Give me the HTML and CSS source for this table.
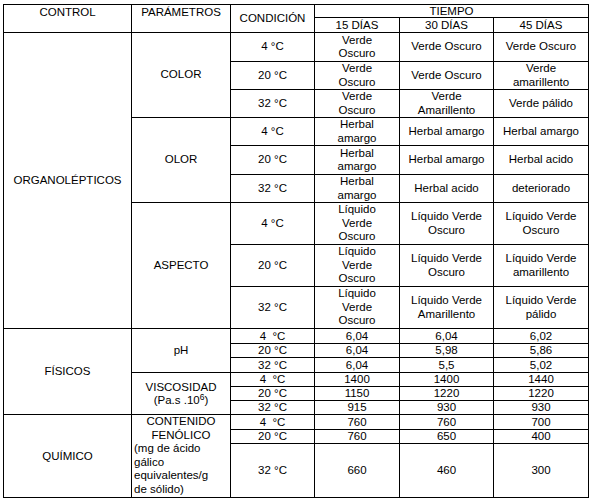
FILE: index.html
```html
<!DOCTYPE html>
<html lang="es">
<head>
<meta charset="utf-8">
<title>Control de estabilidad</title>
<link rel="stylesheet" href="styles.css">
</head>
<body>
<div class="page">
<table class="grid">
<colgroup>
<col class="c-control"><col class="c-param"><col class="c-cond"><col class="c-d15"><col class="c-d30"><col class="c-d45">
</colgroup>
<tr class="h13">
<td rowspan="2" class="top">CONTROL</td>
<td rowspan="2" class="top">PARÁMETROS</td>
<td rowspan="2">CONDICIÓN</td>
<td colspan="3" class="tight">TIEMPO</td>
</tr>
<tr class="h15">
<td>15 DÍAS</td><td>30 DÍAS</td><td>45 DÍAS</td>
</tr>

<tr class="h29">
<td rowspan="9">ORGANOLÉPTICOS</td>
<td rowspan="3">COLOR</td>
<td>4 °C</td><td>Verde<br>Oscuro</td><td>Verde Oscuro</td><td>Verde Oscuro</td>
</tr>
<tr class="h28">
<td>20 °C</td><td>Verde<br>Oscuro</td><td>Verde Oscuro</td><td>Verde<br>amarillento</td>
</tr>
<tr class="h28">
<td>32 °C</td><td>Verde<br>Oscuro</td><td>Verde<br>Amarillento</td><td>Verde pálido</td>
</tr>

<tr class="h28">
<td rowspan="3">OLOR</td>
<td>4 °C</td><td>Herbal<br>amargo</td><td>Herbal amargo</td><td>Herbal amargo</td>
</tr>
<tr class="h29">
<td>20 °C</td><td>Herbal<br>amargo</td><td>Herbal amargo</td><td>Herbal acido</td>
</tr>
<tr class="h28">
<td>32 °C</td><td>Herbal<br>amargo</td><td>Herbal acido</td><td>deteriorado</td>
</tr>

<tr class="h42">
<td rowspan="3">ASPECTO</td>
<td>4 °C</td><td>Líquido<br>Verde<br>Oscuro</td><td>Líquido Verde<br>Oscuro</td><td>Líquido Verde<br>Oscuro</td>
</tr>
<tr class="h42">
<td>20 °C</td><td>Líquido<br>Verde<br>Oscuro</td><td>Líquido Verde<br>Oscuro</td><td>Líquido Verde<br>amarillento</td>
</tr>
<tr class="h42">
<td>32 °C</td><td>Líquido<br>Verde<br>Oscuro</td><td>Líquido Verde<br>Amarillento</td><td>Líquido Verde<br>pálido</td>
</tr>

<tr class="h15">
<td rowspan="6">FÍSICOS</td>
<td rowspan="3">pH</td>
<td>4&nbsp; °C</td><td>6,04</td><td>6,04</td><td>6,02</td>
</tr>
<tr class="h14">
<td>20 °C</td><td>6,04</td><td>5,98</td><td>5,86</td>
</tr>
<tr class="h15">
<td>32 °C</td><td>6,04</td><td>5,5</td><td>5,02</td>
</tr>
<tr class="h14">
<td rowspan="3">VISCOSIDAD<br>(Pa.s .10<sup class="exp">6</sup>)</td>
<td>4&nbsp; °C</td><td>1400</td><td>1400</td><td>1440</td>
</tr>
<tr class="h14">
<td>20 °C</td><td>1150</td><td>1220</td><td>1220</td>
</tr>
<tr class="h14">
<td>32 °C</td><td>915</td><td>930</td><td>930</td>
</tr>

<tr class="h15">
<td rowspan="3">QUÍMICO</td>
<td rowspan="3" class="phenol">
<span class="ln mid">CONTENIDO</span>
<span class="ln mid">FENÓLICO</span>
<span class="ln">(mg de ácido</span>
<span class="ln">gálico</span>
<span class="ln">equivalentes/g</span>
<span class="ln">de sólido)</span>
</td>
<td>4&nbsp; °C</td><td>760</td><td>760</td><td>700</td>
</tr>
<tr class="h14">
<td>20 °C</td><td>760</td><td>650</td><td>400</td>
</tr>
<tr class="h54">
<td>32 °C</td><td>660</td><td>460</td><td>300</td>
</tr>
</table>
</div>
</body>
</html>
```

FILE: styles.css
```css
html, body {
  margin: 0;
  padding: 0;
  background: #ffffff;
}
body {
  font-family: "Liberation Sans", Arial, sans-serif;
  font-size: 11.5px;
  color: #000000;
}
.page {
  padding: 4px 0 0 3px;
}
.grid {
  border-collapse: collapse;
  table-layout: fixed;
  width: 586px;
}
.c-control { width: 128px; }
.c-param { width: 99px; }
.c-cond { width: 84px; }
.c-d15 { width: 85px; }
.c-d30 { width: 94px; }
.c-d45 { width: 95px; }

.grid td {
  border: 1px solid #000000;
  padding: 0;
  text-align: center;
  vertical-align: middle;
  line-height: 13.5px;
  overflow: hidden;
  white-space: nowrap;
}
.grid td.top {
  vertical-align: top;
  line-height: 12px;
  padding-top: 1px;
}
.grid td.tight {
  line-height: 12px;
}
.h13 { height: 13px; }
.h14 { height: 14px; }
.h15 { height: 15px; }
.h28 { height: 28px; }
.h29 { height: 29px; }
.h42 { height: 42px; }
.h54 { height: 54px; }

.h14 td, .h15 td {
  line-height: 13px;
}

.exp {
  font-size: 8.5px;
  line-height: 0;
  vertical-align: 4px;
}
.grid td.phenol {
  vertical-align: top;
  text-align: left;
  padding-left: 2px;
  line-height: 13.6px;
}
.ln {
  display: block;
}
.ln.mid {
  text-align: center;
  margin-left: -2px;
}
```
